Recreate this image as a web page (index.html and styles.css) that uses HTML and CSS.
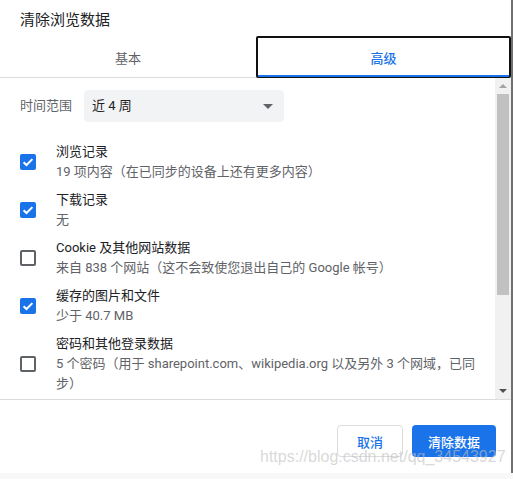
FILE: index.html
```html
<!DOCTYPE html>
<html lang="zh-CN">
<head>
<meta charset="utf-8">
<title>清除浏览数据</title>
<link rel="stylesheet" href="styles.css">
</head>
<body>
<div class="dialog">
  <div class="title">清除浏览数据</div>
  <div class="tabs">
    <div class="tab">基本</div>
    <div class="tab active">高级</div>
  </div>
  <div class="body">
    <div class="content">
      <div class="range">
        <span class="range-label">时间范围</span>
        <div class="select"><span>近 4 周</span><span class="caret"></span></div>
      </div>
      <div class="rows">
        <div class="row">
          <span class="cb checked"><svg viewBox="0 0 16 16" width="16" height="16"><path d="M3.6 8.2l2.9 2.8 5.9-5.9" fill="none" stroke="#fff" stroke-width="2"/></svg></span>
          <div class="text"><div class="label">浏览记录</div><div class="sub">19 项内容（在已同步的设备上还有更多内容）</div></div>
        </div>
        <div class="row">
          <span class="cb checked"><svg viewBox="0 0 16 16" width="16" height="16"><path d="M3.6 8.2l2.9 2.8 5.9-5.9" fill="none" stroke="#fff" stroke-width="2"/></svg></span>
          <div class="text"><div class="label">下载记录</div><div class="sub">无</div></div>
        </div>
        <div class="row">
          <span class="cb"></span>
          <div class="text"><div class="label">Cookie 及其他网站数据</div><div class="sub">来自 838 个网站（这不会致使您退出自己的 Google 帐号）</div></div>
        </div>
        <div class="row">
          <span class="cb checked"><svg viewBox="0 0 16 16" width="16" height="16"><path d="M3.6 8.2l2.9 2.8 5.9-5.9" fill="none" stroke="#fff" stroke-width="2"/></svg></span>
          <div class="text"><div class="label">缓存的图片和文件</div><div class="sub">少于 40.7 MB</div></div>
        </div>
        <div class="row">
          <span class="cb"></span>
          <div class="text"><div class="label">密码和其他登录数据</div><div class="sub">5 个密码（用于 sharepoint.com、wikipedia.org 以及另外 3 个网域，已同步）</div></div>
        </div>
      </div>
    </div>
    <div class="scrollbar">
      <div class="sb-btn"><span class="tri-up"></span></div>
      <div class="track"><div class="thumb"></div></div>
      <div class="sb-btn"><span class="tri-down"></span></div>
    </div>
  </div>
  <div class="footer">
    <button class="btn cancel">取消</button>
    <button class="btn primary">清除数据</button>
  </div>
</div>
<div class="watermark">https://blog.csdn.net/qq_34543927</div>
</body>
</html>
```

FILE: styles.css
```css
html, body {
  margin: 0;
  padding: 0;
  background: #f8f8f8;
}
body {
  font-family: Roboto, "Noto Sans CJK SC", sans-serif;
  font-size: 13px;
  color: #202124;
  position: relative;
  width: 513px;
  height: 479px;
  overflow: hidden;
}
.dialog {
  width: 511px;
  height: 473px;
  background: #fff;
  border-right: 2px solid #707070;
  display: flex;
  flex-direction: column;
}
.title {
  height: 24px;
  line-height: 24px;
  padding: 8px 20px 4px;
  font-size: 15px;
  color: #202124;
}
.tabs {
  height: 41px;
  border-bottom: 1px solid #dadce0;
  display: grid;
  grid-template-columns: 256px 1fr;
}
.tab {
  display: flex;
  align-items: center;
  justify-content: center;
  color: #5f6368;
  font-size: 13px;
  position: relative;
}
.tab.active {
  color: #1a73e8;
  font-weight: 500;
  height: 42px;
  box-sizing: border-box;
  box-shadow: inset 0 0 0 2px #111;
  border-radius: 2px;
}
.tab.active::after {
  content: "";
  position: absolute;
  left: 2px;
  right: 2px;
  bottom: 1px;
  height: 2px;
  background: #1a73e8;
}
.body {
  height: 321px;
  border-bottom: 1px solid #dadce0;
  display: flex;
  overflow: hidden;
}
.content {
  flex: 1;
  padding: 12px 0 0 20px;
  overflow: hidden;
}
.range {
  display: flex;
  align-items: center;
  gap: 12px;
  height: 32px;
  margin-bottom: 20px;
}
.range-label {
  color: #5f6368;
  line-height: 20px;
}
.select {
  width: 200px;
  height: 32px;
  box-sizing: border-box;
  background: #f1f3f4;
  border-radius: 4px;
  padding: 0 8px;
  display: flex;
  align-items: center;
  justify-content: space-between;
  line-height: 20px;
  color: #202124;
}
.caret {
  width: 0;
  height: 0;
  border-left: 5px solid transparent;
  border-right: 5px solid transparent;
  border-top: 5px solid #5f6368;
  margin-right: 3px;
}
.rows {
  display: flex;
  flex-direction: column;
  gap: 8px;
}
.row {
  display: flex;
  align-items: center;
  gap: 20px;
}
.cb {
  width: 16px;
  height: 16px;
  box-sizing: border-box;
  border: 2px solid #5f6368;
  border-radius: 2px;
  flex: none;
  position: relative;
}
.cb.checked {
  border: none;
  background: #1a73e8;
}
.cb svg {
  display: block;
}
.text {
  line-height: 20px;
  width: 426px;
}
.label {
  color: #202124;
}
.sub {
  color: #5f6368;
  line-height: 20px;
}
.scrollbar {
  width: 16px;
  background: #f1f1f1;
  display: flex;
  flex-direction: column;
  flex: none;
}
.sb-btn {
  height: 16px;
  display: flex;
  align-items: center;
  justify-content: center;
  flex: none;
}
.tri-up {
  width: 0;
  height: 0;
  border-left: 4px solid transparent;
  border-right: 4px solid transparent;
  border-bottom: 4px solid #a3a3a3;
}
.tri-down {
  width: 0;
  height: 0;
  border-left: 4px solid transparent;
  border-right: 4px solid transparent;
  border-top: 4px solid #505050;
}
.track {
  flex: 1;
}
.thumb {
  height: 201px;
  margin: 0 2px;
  background: #c1c1c1;
}
.footer {
  flex: 1;
  display: flex;
  justify-content: flex-end;
  align-items: flex-start;
  gap: 9px;
  padding: 25px 15px 0 0;
}
.btn {
  height: 32px;
  font-family: Roboto, "Noto Sans CJK SC", sans-serif;
  font-size: 13px;
  font-weight: 500;
  border-radius: 4px;
  cursor: pointer;
}
.cancel {
  background: #fff;
  color: #1a73e8;
  border: 1px solid #dadce0;
  width: 66px;
}
.primary {
  background: #1a73e8;
  color: #fff;
  border: none;
  width: 84px;
}
.watermark {
  position: absolute;
  left: 260px;
  top: 447px;
  font-family: "Liberation Sans", Arial, sans-serif;
  font-size: 16px;
  line-height: 20px;
  color: rgba(190, 190, 190, 0.6);
  white-space: nowrap;
}
```
